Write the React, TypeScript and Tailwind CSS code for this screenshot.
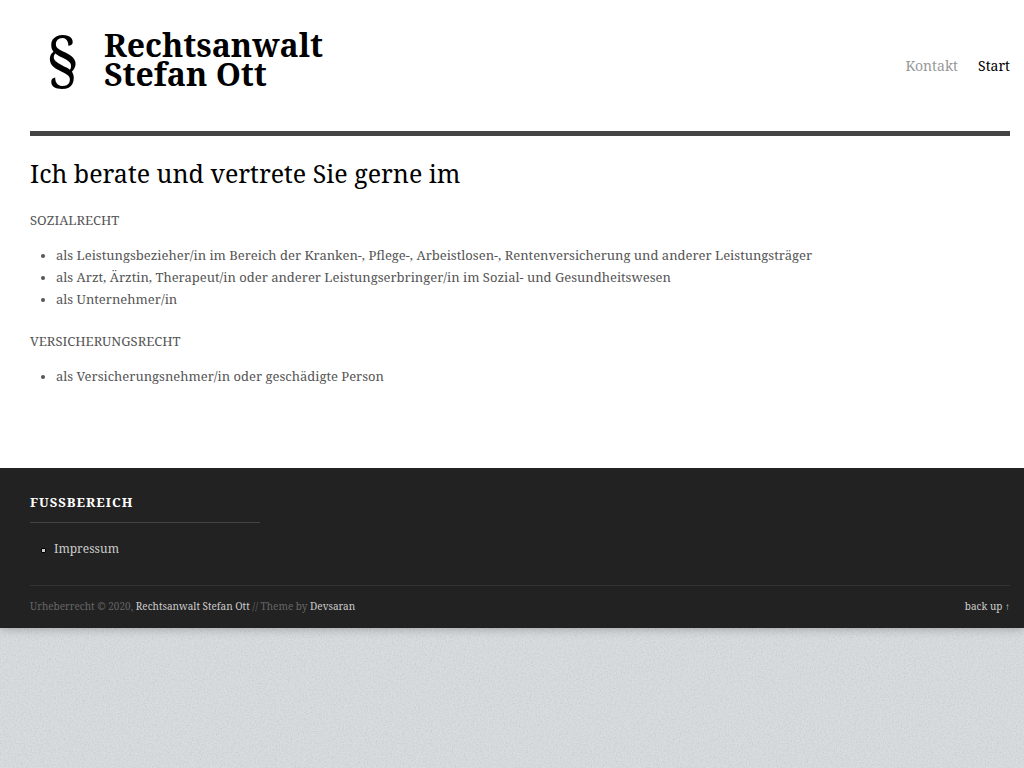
import React from 'react';

const practiceAreas = [
  {
    title: 'SOZIALRECHT',
    items: [
      'als Leistungsbezieher/in im Bereich der Kranken-, Pflege-, Arbeistlosen-, Rentenversicherung und anderer Leistungsträger',
      'als Arzt, Ärztin, Therapeut/in oder anderer Leistungserbringer/in im Sozial- und Gesundheitswesen',
      'als Unternehmer/in',
    ],
  },
  {
    title: 'VERSICHERUNGSRECHT',
    items: ['als Versicherungsnehmer/in oder geschädigte Person'],
  },
];

const Header: React.FC = () => (
  <header className="flex items-start justify-between border-b-5 border-[#444] pt-[30px] pb-[43px]">
    <a href="#" className="flex items-start text-black">
      <span className="w-[74px] pl-[15px] text-[62px] leading-[57px]">§</span>
      <h1 className="text-[32px] leading-[29px] font-bold">
        Rechtsanwalt
        <br />
        Stefan Ott
      </h1>
    </a>
    <nav className="flex gap-5 pt-[26px] text-sm leading-5">
      <a href="#kontakt" className="text-[#999]">Kontakt</a>
      <a href="#" className="text-black">Start</a>
    </nav>
  </header>
);

const Content: React.FC = () => (
  <main className="pt-[22px] pb-[61px] text-[13px] leading-[22px] text-[#555]">
    <h2 className="mb-5 text-[25px] leading-[31px] text-black">
      Ich berate und vertrete Sie gerne im
    </h2>
    {practiceAreas.map((area) => (
      <section key={area.title} className="mb-5">
        <p className="mb-[13px]">{area.title}</p>
        <ul className="list-disc pl-[26px] marker:text-[11px]">
          {area.items.map((item) => (
            <li key={item}>{item}</li>
          ))}
        </ul>
      </section>
    ))}
  </main>
);

const Footer: React.FC = () => (
  <footer className="bg-[#222] pl-[30px] pr-[14px] pt-6 pb-3">
    <div className="w-[230px]">
      <h2 className="mb-[15px] border-b border-[#444] pb-[10px] text-[13px] leading-5 font-bold tracking-[1px] text-white">
        FUSSBEREICH
      </h2>
      <ul className="text-xs leading-[22px] text-[#ccc]">
        <li className="flex items-center gap-2 pl-[11px]">
          <span className="mt-[2px] h-[5px] w-[5px] rounded-[1px] border border-black bg-[#ccc]" />
          <a href="#impressum">Impressum</a>
        </li>
      </ul>
    </div>
    <div className="mt-[25px] flex justify-between border-t border-[#333] pt-[10px] text-[10px] leading-[20px] text-[#666]">
      <p>
        Urheberrecht © 2020, <a href="#" className="text-[#ccc]">Rechtsanwalt Stefan Ott</a> // Theme by{' '}
        <a href="#devsaran" className="text-[#ccc]">Devsaran</a>
      </p>
      <a href="#" className="text-[#ccc]">back up ↑</a>
    </div>
  </footer>
);

// Fine paper grain behind the page
const Grain: React.FC = () => (
  <svg className="absolute inset-0 h-full w-full" aria-hidden="true">
    <filter id="grain">
      <feTurbulence type="fractalNoise" baseFrequency="0.67" numOctaves="3" seed="4" />
      <feColorMatrix values="0 0 0 0 0.4  0 0 0 0 0.42  0 0 0 0 0.45  0.7 0 0 0 -0.28" />
    </filter>
    <rect width="100%" height="100%" filter="url(#grain)" />
  </svg>
);

const App: React.FC = () => (
  <div className="relative min-h-screen bg-[#d9dcdf] font-['Droid_Serif','Noto_Serif',serif]">
    <Grain />
    <div className="relative shadow-[0_0_10px_rgba(0,0,0,0.3)]">
      <div className="bg-white pl-[30px] pr-[14px]">
        <Header />
        <Content />
      </div>
      <Footer />
    </div>
  </div>
);

export default App;
